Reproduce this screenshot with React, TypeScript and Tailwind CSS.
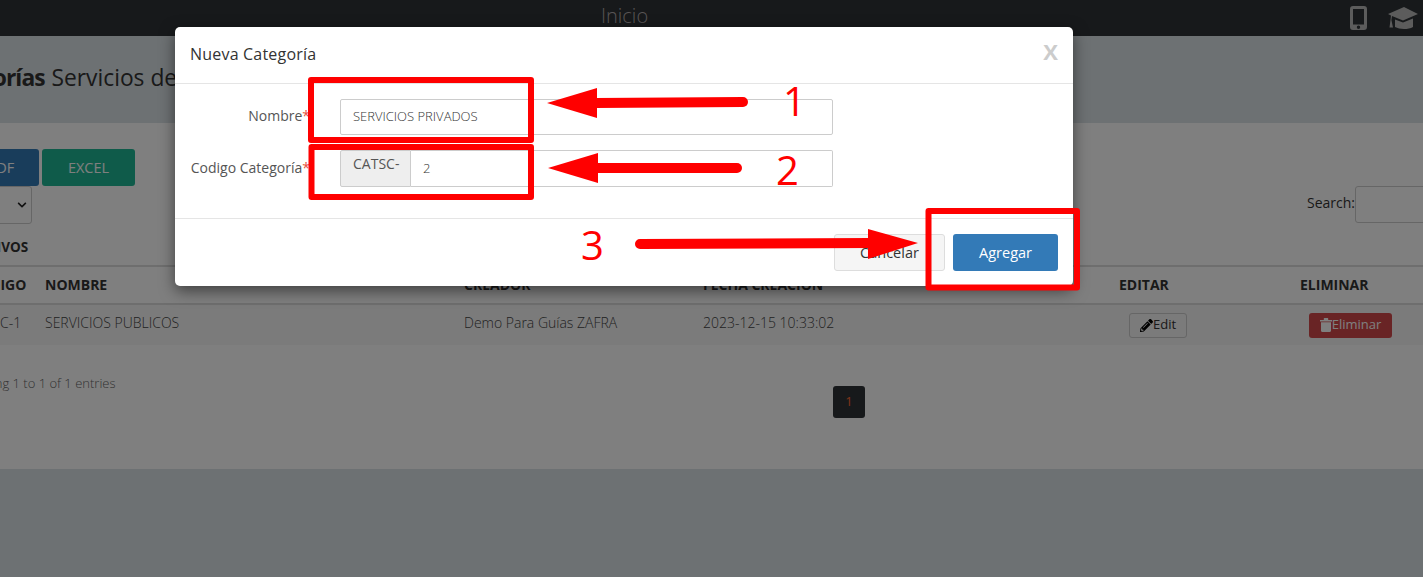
import { FaChevronDown, FaPencilAlt } from "react-icons/fa";

const COLUMNS = "grid grid-cols-[75px_419px_239px_416px_181px_1fr] items-center";

function PhoneIcon() {
  return (
    <svg width="17" height="24" viewBox="0 0 17 24" className="text-[#b8b8b8]">
      <path
        fill="currentColor"
        fillRule="evenodd"
        d="M3 0h11a3 3 0 0 1 3 3v18a3 3 0 0 1-3 3H3a3 3 0 0 1-3-3V3a3 3 0 0 1 3-3ZM3 3v15.5h11V3ZM8.5 19.5a1.7 1.7 0 1 0 0 3.4 1.7 1.7 0 0 0 0-3.4Z"
      />
    </svg>
  );
}

function CapIcon() {
  return (
    <svg width="30" height="22" viewBox="0 0 30 22" className="text-[#b8b8b8]">
      <path fill="currentColor" d="M0 7 16 0l14 7-15 6.5L4 9l-.6 4 1.6 7.5H1.5L2.5 13 3 8.5Z" />
      <path fill="currentColor" d="M7 12.5 15 15.5l10-4v8.5c-2.5 1.4-5.500 2-9 2-3.500 0-6.500-.7-9-2Z" />
    </svg>
  );
}

function TrashIcon() {
  return (
    <svg width="12" height="14" viewBox="0 0 12 14" className="text-white">
      <path fill="currentColor" d="M0 2h3.800V.6C3.800.3 4 0 4.400 0h3.200c.4 0 .6.3.6.6V2H12v1.500H0ZM1 4.300h10V12.800c0 .7-.5 1.200-1.200 1.200H2.200C1.500 14 1 13.500 1 12.800Z" />
    </svg>
  );
}

function Page() {
  return (
    <div className="h-screen overflow-hidden bg-[#dae2e6] font-['Open_Sans',sans-serif] text-[14px] text-[#333]">
      <nav className="relative flex h-9 items-center justify-end gap-[21px] bg-[#2e3236] pr-[5px]">
        <span className="absolute left-[601px] top-[1px] text-[20px] font-light text-[#b0a8a8]">Inicio</span>
        <PhoneIcon />
        <CapIcon />
      </nav>

      <header className="flex h-[87px] items-center whitespace-nowrap text-[24px] text-[#333]">
        <h1 className="-ml-[67px] mb-[5px] origin-left scale-x-[0.95]">
          <span className="mr-[1px] font-bold tracking-[-1px]">Categorías</span> Servicios de
        </h1>
      </header>

      <main className="h-[346px] bg-white pt-[26px]">
        <div className="-ml-[45px] w-[1568px]">
          <div className="flex gap-[3px] text-[14.500px] text-white">
            <button className="h-[37px] w-[84px] rounded-[3px] bg-[#337ab7] pl-[8px] text-center">PDF</button>
            <button className="h-[37px] w-[93px] rounded-[3px] bg-[#1fb795]">EXCEL</button>
          </div>

          <div className="flex h-[38px] items-start justify-between">
            <div className="flex h-[38px] w-[77px] items-center justify-end rounded-[3px] border border-[#ccc] pr-[4px]">
              <FaChevronDown className="h-[10px] w-[10px] text-[#222]" />
            </div>
            <label className="flex items-center gap-0">
              <span className="mb-[5px]">Search:</span>
              <span className="block h-[37px] w-[168px] rounded-[3px] border border-[#ccc]" />
            </label>
          </div>

          <p className="mt-[12px] pl-[16px] text-[13.500px] font-bold leading-[22px] text-[#333]">ACTIVOS</p>
          <div className="ml-[45px] mt-[7px] border-t-2 border-[#ddd]">
            <div className={`${COLUMNS} -ml-[30px] h-[36px] pb-[2px] font-bold text-[#333]`}>
              <span>CODIGO</span>
              <span>NOMBRE</span>
              <span>CREADOR</span>
              <span>FECHA CREACIÓN</span>
              <span>EDITAR</span>
              <span>ELIMINAR</span>
            </div>
          </div>
          <div className="ml-[45px] border-t-2 border-[#ddd] bg-[#f6f6f6]">
            <div className={`${COLUMNS} -ml-[30px] h-[40px] text-[14px] font-light text-[#444]`}>
              <span className="-ml-[2px] pb-[5px]">CATSC-1</span>
              <span className="pb-[5px]">SERVICIOS PUBLICOS</span>
              <span className="pb-[5px]">Demo Para Guías ZAFRA</span>
              <span className="pb-[5px]">2023-12-15 10:33:02</span>
              <span className="pl-[10px]">
                <button className="flex h-[25px] w-[58px] items-center justify-center rounded-[3px] border border-[#ccc] text-[13px] font-normal text-[#333]">
                  <FaPencilAlt className="h-[13px] w-[13px] text-black" />
                  Edit
                </button>
              </span>
              <span className="pl-[9px]">
                <button className="flex h-[25px] w-[83px] items-center justify-center rounded-[3px] bg-[#d2484a] text-[13px] font-normal text-white">
                  <TrashIcon />
                  Eliminar
                </button>
              </span>
            </div>
          </div>

          <div className="ml-[45px] mt-[27px] flex items-start">
            <p className="-ml-[45px] w-[878px] pl-[5px] text-[13px] font-light leading-[22px] text-[#666]">Showing 1 to 1 of 1 entries</p>
            <span className="mt-[14px] flex h-[32px] w-[32px] items-center justify-center rounded-[3px] bg-[#2e3236] text-[13px] text-[#ff6a33]">
              1
            </span>
          </div>
        </div>
      </main>
    </div>
  );
}

function Modal() {
  return (
    <div className="ml-[175px] mt-[27px] w-[898px] rounded-[5px] bg-white font-['Open_Sans',sans-serif] text-[14px] text-[#555] shadow-[0_5px_15px_rgba(0,0,0,0.5)]">
      <div className="flex h-[57px] items-center justify-between border-b border-[#e5e5e5] px-[15px]">
        <h4 className="mb-[3px] text-[16px] tracking-[0.2px] text-[#333]">Nueva Categoría</h4>
        <span className="mb-[8px] text-[22px] font-bold text-[#ccc]">X</span>
      </div>

      <div className="flex flex-col gap-[15px] pb-[31px] pl-[15px] pt-[15px]">
        <div className="flex items-center gap-[30px]">
          <label className="mb-[3px] w-[120px] text-right">
            Nombre<span className="text-[#e74c3c]">*</span>
          </label>
          <div className="flex h-[36px] w-[493px] items-center rounded-[2px] border border-[#ccc] pl-[12px] text-[13px] font-light text-[#333]">SERVICIOS PRIVADOS</div>
        </div>
        <div className="flex items-center gap-[30px]">
          <label className="mb-[3px] w-[120px] text-right">
            Codigo Categoría<span className="text-[#e74c3c]">*</span>
          </label>
          <div className="flex h-[37px] w-[493px]">
            <span className="w-[71px] rounded-l-[2px] border border-[#ccc] bg-[#eee] pl-[12px] pt-[2px]">CATSC-</span>
            <span className="flex flex-1 items-center rounded-r-[2px] border border-l-0 border-[#ccc] pl-[12px] text-[13px] font-light text-[#333]">2</span>
          </div>
        </div>
      </div>

      <div className="flex justify-end gap-[8px] border-t border-[#e5e5e5] p-[15px]">
        <button className="h-[37px] w-[111px] rounded-[3px] border border-[#ddd] bg-[#f5f5f5] text-[14.500px] text-[#333]">Cancelar</button>
        <button className="h-[37px] w-[105px] rounded-[3px] bg-[#337ab7] text-[14.500px] font-medium text-white">Agregar</button>
      </div>
    </div>
  );
}

// the red marks drawn over the screenshot
function Annotations() {
  return (
    <>
      <svg className="absolute left-0 top-0" width="1423" height="577" fill="none">
        <g stroke="#ff0000" strokeWidth="6" strokeLinejoin="round">
          <rect x="311" y="80" width="220" height="60" />
          <rect x="311.500" y="147" width="219.500" height="50" />
          <rect x="928.500" y="211" width="148.500" height="76.500" />
        </g>
        <g stroke="#ff0000" strokeWidth="10" strokeLinecap="round">
          <path d="M595 103 L743 102" />
          <path d="M596 168 L737 168" />
          <path d="M640 244 L870 243" />
        </g>
        <g fill="#ff0000">
          <path d="M547 103 L597 88 L597 118 Z" />
          <path d="M548 168 L598 153 L598 183 Z" />
          <path d="M918 243 L868 229 L868 259 Z" />
        </g>
      </svg>
      <span className="absolute left-[783px] top-[74px] font-['Open_Sans',sans-serif] text-[40px] leading-[54px] text-[#ff0000]">1</span>
      <span className="absolute left-[776px] top-[143px] font-['Open_Sans',sans-serif] text-[40px] leading-[54px] text-[#ff0000]">2</span>
      <span className="absolute left-[581px] top-[218px] font-['Open_Sans',sans-serif] text-[40px] leading-[54px] text-[#ff0000]">3</span>
    </>
  );
}

export default function App() {
  return (
    <div className="relative h-screen overflow-hidden">
      <Page />
      <div className="absolute inset-0 bg-black/50">
        <Modal />
      </div>
      <Annotations />
    </div>
  );
}
